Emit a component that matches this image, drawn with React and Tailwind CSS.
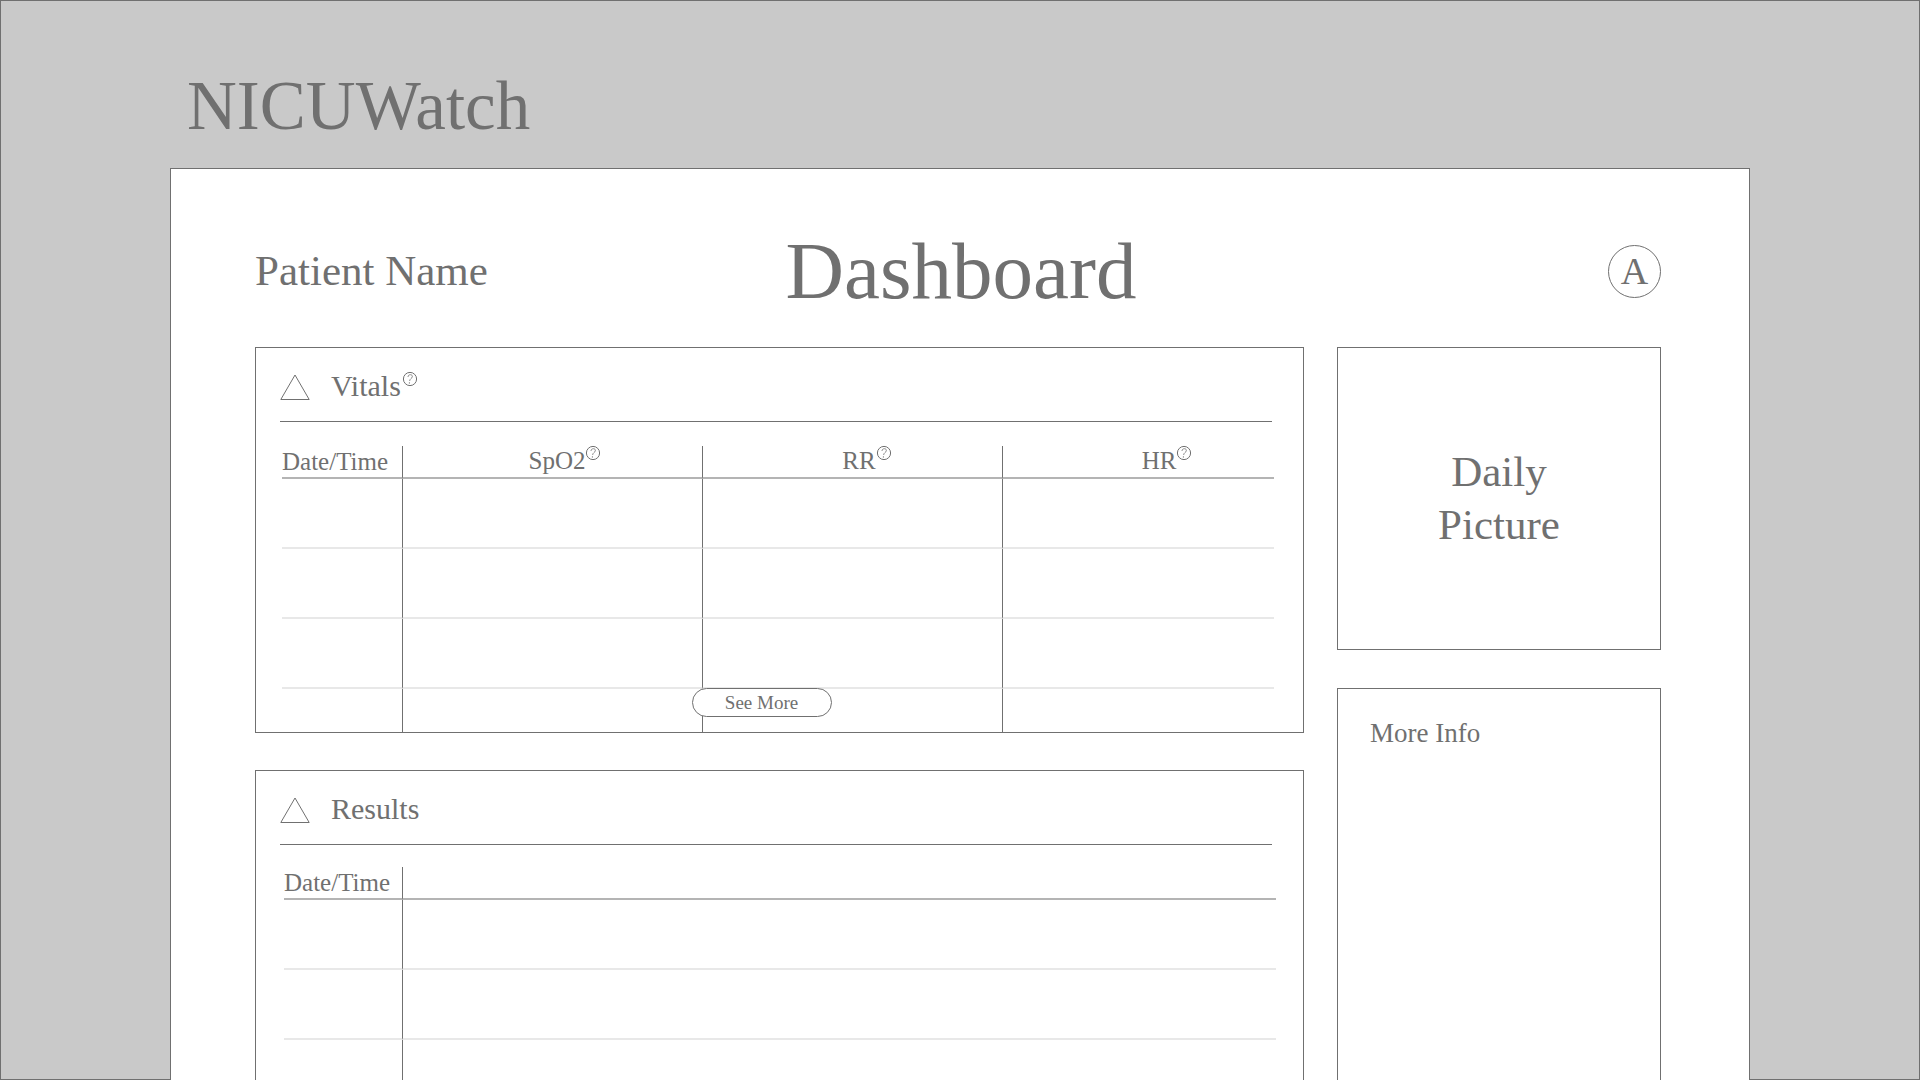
import React from "react";

function Help({ label }) {
  return (
    <button type="button" aria-label={label} className="block h-[14px] w-[14px] shrink-0">
      <svg viewBox="0 0 14 14" className="h-[14px] w-[14px] overflow-visible" fill="none" stroke="#707070" strokeWidth="1">
        <circle cx="7" cy="7" r="6.6" />
        <path d="M5 5C5 3.4 6.2 2.7 7.4 2.7C8.8 2.7 9.6 3.6 9.3 4.8C9 6.6 6.8 6.6 6.6 9" strokeWidth="0.8" />
        <circle cx="6.4" cy="10.9" r="0.6" fill="#707070" stroke="none" />
      </svg>
    </button>
  );
}

function PanelTitle({ title, help }) {
  return (
    <div className="ml-[24px] mr-[31px] flex h-[74px] items-center border-b border-[#707070] pt-[4px]">
      <svg viewBox="0 0 30 26" className="h-[26px] w-[30px]" fill="none" stroke="#707070" strokeWidth="1">
        <path d="M15 1L29.2 25.5H0.8Z" />
      </svg>
      <h2 className="ml-[21px] pb-[2px] text-[30px] leading-[34px]">{title}</h2>
      {help && (
        <div className="mb-[15px] ml-[2px]">
          <Help label={"About " + title} />
        </div>
      )}
    </div>
  );
}

const headCell = "h-[33px] border-b-2 border-b-[#b4b4b4] p-0 font-normal";
const bodyCell = "h-[70px] border-b-2 border-b-[#e8e8e8]";
const divider = "border-l border-l-[#707070]";

const vitals = [
  { name: "SpO2", pad: "pl-[24px]" },
  { name: "RR", pad: "pl-[28px]" },
  { name: "HR", pad: "pl-[56px]" },
];

function VitalsTable() {
  return (
    <table className="w-full table-fixed border-separate border-spacing-0 text-[25px] leading-[28px]">
      <colgroup>
        <col className="w-[120px]" />
        <col className="w-[300px]" />
        <col className="w-[300px]" />
        <col />
      </colgroup>
      <thead>
        <tr>
          <th scope="col" className={headCell + " text-left"}>Date/Time</th>
          {vitals.map(({ name, pad }) => (
            <th key={name} scope="col" className={headCell + " " + divider}>
              <div className={"flex h-[30px] items-center justify-center gap-[1px] pb-[2px] " + pad}>
                {name}
                <div className="mb-[16px]">
                  <Help label={"About " + name} />
                </div>
              </div>
            </th>
          ))}
        </tr>
      </thead>
      <tbody>
        {[0, 1, 2].map((row) => (
          <tr key={row}>
            <td className={bodyCell} />
            {vitals.map(({ name }) => (
              <td key={name} className={bodyCell + " " + divider} />
            ))}
          </tr>
        ))}
        <tr>
          <td className="h-[43px]" />
          {vitals.map(({ name }) => (
            <td key={name} className={"h-[43px] " + divider} />
          ))}
        </tr>
      </tbody>
    </table>
  );
}

function ResultsTable() {
  return (
    <table className="w-full table-fixed border-separate border-spacing-0 text-[25px] leading-[28px]">
      <colgroup>
        <col className="w-[118px]" />
        <col />
      </colgroup>
      <thead>
        <tr>
          <th scope="col" className={headCell + " text-left"}>Date/Time</th>
          <th scope="col" aria-label="Result" className={headCell + " " + divider} />
        </tr>
      </thead>
      <tbody>
        {[0, 1].map((row) => (
          <tr key={row}>
            <td className={bodyCell} />
            <td className={bodyCell + " " + divider} />
          </tr>
        ))}
        <tr>
          <td className="h-[70px]" />
          <td className={"h-[70px] " + divider} />
        </tr>
      </tbody>
    </table>
  );
}

export default function App() {
  return (
    <div className="h-screen overflow-hidden bg-[#c9c9c9] font-['Liberation_Serif',serif] text-[#707070]">
      <div className="flex h-full flex-col border border-[#707070] px-[169px]">
        <header className="flex h-[167px] shrink-0 items-end pb-[22px] pl-[17px]">
          <a href="#home" className="text-[69px] leading-[80px]">NICUWatch</a>
        </header>

        <main className="mb-[-1px] flex-1 border border-b-0 border-[#707070] bg-white pl-[84px] pr-[88px]">
          <div className="grid h-[178px] grid-cols-[1fr_auto_1fr] items-center pt-[26px]">
            <p className="text-[43px] leading-[50px]">Patient Name</p>
            <h1 className="pl-[6px] text-[81px] leading-[90px]">Dashboard</h1>
            <button
              type="button"
              aria-label="Account A"
              className="flex h-[53px] w-[53px] items-center justify-center justify-self-end rounded-full border border-[#707070] text-[38px] leading-[40px]"
            >
              A
            </button>
          </div>

          <div className="grid grid-cols-[1fr_324px] gap-x-[33px]">
            <div className="flex flex-col gap-[37px]">
              <section className="relative border border-[#707070]">
                <PanelTitle title="Vitals" help />
                <div className="ml-[26px] mr-[29px] mt-[24px]">
                  <VitalsTable />
                </div>
                <button
                  type="button"
                  className="absolute bottom-[15px] left-1/2 ml-[-88px] h-[29px] w-[140px] rounded-full border border-[#707070] bg-white text-[19px] leading-[24px]"
                >
                  See More
                </button>
              </section>

              <section className="border border-[#707070]">
                <PanelTitle title="Results" />
                <div className="ml-[28px] mr-[27px] mt-[22px]">
                  <ResultsTable />
                </div>
              </section>
            </div>

            <aside className="flex flex-col gap-[38px]">
              <section className="flex h-[303px] items-center justify-center border border-[#707070] pb-[2px]">
                <h2 className="w-[130px] text-center text-[43px] leading-[53px]">Daily Picture</h2>
              </section>
              <section className="flex-1 border border-[#707070] px-[32px] pt-[27px]">
                <h2 className="text-[27px] leading-[34px]">More Info</h2>
              </section>
            </aside>
          </div>
        </main>
      </div>
    </div>
  );
}
